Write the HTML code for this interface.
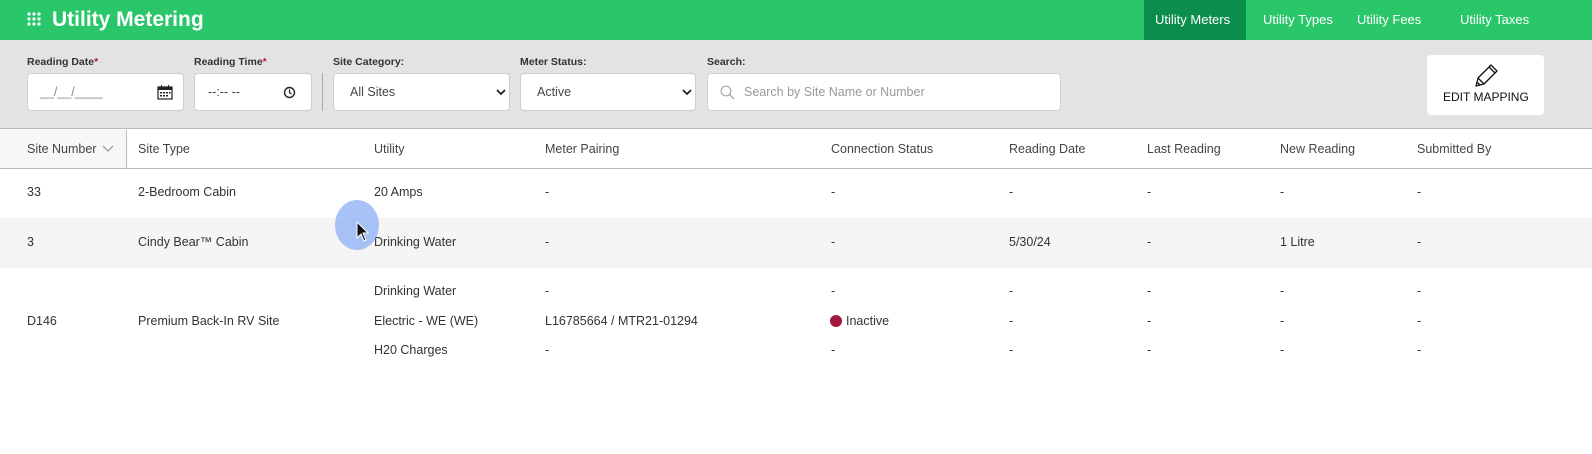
<!DOCTYPE html>
<html><head><meta charset="utf-8"><style>
*{box-sizing:border-box;margin:0;padding:0}
body{width:1592px;height:454px;background:#fff;font-family:"Liberation Sans",Arial,sans-serif;color:#333;position:relative;overflow:hidden;font-size:12px}
.abs{position:absolute;white-space:nowrap}
.top{position:absolute;left:0;top:0;width:1592px;height:40px;background:#2ac66a}
.title{left:52px;top:8px;font-size:21px;font-weight:bold;color:#fff}
.nav{top:0;height:40px;line-height:39px;color:#fff;font-size:13px}
.filt{position:absolute;left:0;top:40px;width:1592px;height:89px;background:#e3e3e6;border-bottom:1px solid #b8b8b8}
.lbl{font-size:10.5px;font-weight:bold;color:#333;top:56px}
.lbl b{color:#c0143c}
.box{position:absolute;top:73px;height:38px;background:#fff;border:1px solid #cfcfd3;border-radius:4px;font-size:12.5px;color:#444;line-height:36px}
.th{top:142px;font-size:12.5px;color:#444}
.td{font-size:12.5px;color:#333}
</style></head><body>
<div class="top"></div>
<svg class="abs" style="left:27px;top:12px" width="14" height="14"><g fill="#fff"><circle cx="2" cy="2" r="1.6"/><circle cx="7" cy="2" r="1.6"/><circle cx="12" cy="2" r="1.6"/><circle cx="2" cy="7" r="1.6"/><circle cx="7" cy="7" r="1.6"/><circle cx="12" cy="7" r="1.6"/><circle cx="2" cy="12" r="1.6"/><circle cx="7" cy="12" r="1.6"/><circle cx="12" cy="12" r="1.6"/></g></svg>
<div class="abs title">Utility Metering</div>
<div class="abs" style="left:1144px;top:0;width:102px;height:40px;background:#0b8d4c"></div>
<div class="abs nav" style="left:1155px">Utility Meters</div>
<div class="abs nav" style="left:1263px">Utility Types</div>
<div class="abs nav" style="left:1357px">Utility Fees</div>
<div class="abs nav" style="left:1460px">Utility Taxes</div>
<div class="filt"></div>
<div class="abs lbl" style="left:27px">Reading Date<b>*</b></div>
<div class="abs lbl" style="left:194px">Reading Time<b>*</b></div>
<div class="abs lbl" style="left:333px">Site Category:</div>
<div class="abs lbl" style="left:520px">Meter Status:</div>
<div class="abs lbl" style="left:707px">Search:</div>
<div class="box" style="left:27px;width:157px;padding-left:12px;color:#888">__/__/____
<svg class="abs" style="left:129px;top:11px" width="16" height="15"><rect x="1" y="2" width="14" height="12" fill="none" stroke="#222" stroke-width="1.2"/><rect x="1" y="2" width="14" height="3" fill="#222"/><g fill="#222"><rect x="3" y="7" width="2" height="1.5"/><rect x="6" y="7" width="2" height="1.5"/><rect x="9" y="7" width="2" height="1.5"/><rect x="12" y="7" width="1.5" height="1.5"/><rect x="3" y="10" width="2" height="1.5"/><rect x="6" y="10" width="2" height="1.5"/><rect x="9" y="10" width="2" height="1.5"/></g><rect x="4" y="0" width="1" height="3" fill="#222"/><rect x="11" y="0" width="1" height="3" fill="#222"/></svg></div>
<div class="box" style="left:194px;width:118px;padding-left:13px">--:-- --
<svg class="abs" style="left:88px;top:12px" width="13" height="13"><circle cx="6.5" cy="6.5" r="5" fill="none" stroke="#222" stroke-width="1.4"/><path d="M6.5 3.5V6.5L8.5 8" fill="none" stroke="#222" stroke-width="1.2"/></svg></div>
<div class="abs" style="left:322px;top:73px;width:1px;height:38px;background:#aaa"></div>
<div class="box" style="left:333px;width:177px;padding-left:16px">All Sites
<svg class="abs" style="left:162px;top:15px" width="10" height="7"><path d="M1 1L5 5L9 1" fill="none" stroke="#222" stroke-width="1.8"/></svg></div>
<div class="box" style="left:520px;width:176px;padding-left:16px">Active
<svg class="abs" style="left:161px;top:15px" width="10" height="7"><path d="M1 1L5 5L9 1" fill="none" stroke="#222" stroke-width="1.8"/></svg></div>
<div class="box" style="left:707px;width:354px;padding-left:36px;color:#999">Search by Site Name or Number
<svg class="abs" style="left:12px;top:11px" width="15" height="15"><circle cx="6" cy="6" r="4.8" fill="none" stroke="#aaa" stroke-width="1.2"/><path d="M9.5 9.5L14 14" stroke="#aaa" stroke-width="1.3"/></svg></div>
<div class="abs" style="left:1427px;top:55px;width:117px;height:60px;background:#fff;border-radius:4px"></div>
<svg class="abs" style="left:1473px;top:62px" width="26" height="27"><path d="M3 24L5 16L18 3L24 9L11 22Z M5 16L11 22 M16 5L22 11 M4 20L7 23" fill="none" stroke="#111" stroke-width="1.3" stroke-linejoin="round"/></svg>
<div class="abs" style="left:1443px;top:90px;font-size:12px;color:#111">EDIT MAPPING</div>
<div class="abs" style="left:0;top:130px;width:127px;height:38px;background:#f7f7f7;border-right:1px solid #bbb"></div>
<div class="abs" style="left:0;top:168px;width:1592px;height:1px;background:#bbb"></div>
<div class="abs th" style="left:27px">Site Number <svg width="12" height="8" style="margin-left:2px"><path d="M1 1L6 6L11 1" fill="none" stroke="#888" stroke-width="1"/></svg></div>
<div class="abs th" style="left:138px">Site Type</div>
<div class="abs th" style="left:374px">Utility</div>
<div class="abs th" style="left:545px">Meter Pairing</div>
<div class="abs th" style="left:831px">Connection Status</div>
<div class="abs th" style="left:1009px">Reading Date</div>
<div class="abs th" style="left:1147px">Last Reading</div>
<div class="abs th" style="left:1280px">New Reading</div>
<div class="abs th" style="left:1417px">Submitted By</div>
<div class="abs" style="left:0;top:218px;width:1592px;height:50px;background:#f5f5f5"></div>
<div class="abs td" style="left:27px;top:185px">33</div><div class="abs td" style="left:138px;top:185px">2-Bedroom Cabin</div><div class="abs td" style="left:374px;top:185px">20 Amps</div>
<div class="abs td" style="left:545px;top:185px">-</div><div class="abs td" style="left:831px;top:185px">-</div><div class="abs td" style="left:1009px;top:185px">-</div><div class="abs td" style="left:1147px;top:185px">-</div><div class="abs td" style="left:1280px;top:185px">-</div><div class="abs td" style="left:1417px;top:185px">-</div>
<div class="abs td" style="left:27px;top:235px">3</div><div class="abs td" style="left:138px;top:235px">Cindy Bear™ Cabin</div><div class="abs td" style="left:374px;top:235px">Drinking Water</div>
<div class="abs td" style="left:545px;top:235px">-</div><div class="abs td" style="left:831px;top:235px">-</div><div class="abs td" style="left:1009px;top:235px">5/30/24</div><div class="abs td" style="left:1147px;top:235px">-</div><div class="abs td" style="left:1280px;top:235px">1 Litre</div><div class="abs td" style="left:1417px;top:235px">-</div>
<div class="abs td" style="left:27px;top:314px">D146</div><div class="abs td" style="left:138px;top:314px">Premium Back-In RV Site</div>
<div class="abs td" style="left:374px;top:284px">Drinking Water</div><div class="abs td" style="left:374px;top:314px">Electric - WE (WE)</div><div class="abs td" style="left:374px;top:343px">H20 Charges</div>
<div class="abs td" style="left:545px;top:284px">-</div><div class="abs td" style="left:545px;top:314px">L16785664 / MTR21-01294</div><div class="abs td" style="left:545px;top:343px">-</div>
<div class="abs td" style="left:831px;top:284px">-</div><div class="abs td" style="left:830px;top:314px"><span style="display:inline-block;width:12px;height:12px;border-radius:50%;background:#a3173f;vertical-align:-2px;margin-right:4px"></span>Inactive</div><div class="abs td" style="left:831px;top:343px">-</div>
<div class="abs td" style="left:1009px;top:284px">-</div><div class="abs td" style="left:1009px;top:314px">-</div><div class="abs td" style="left:1009px;top:343px">-</div>
<div class="abs td" style="left:1147px;top:284px">-</div><div class="abs td" style="left:1147px;top:314px">-</div><div class="abs td" style="left:1147px;top:343px">-</div>
<div class="abs td" style="left:1280px;top:284px">-</div><div class="abs td" style="left:1280px;top:314px">-</div><div class="abs td" style="left:1280px;top:343px">-</div>
<div class="abs td" style="left:1417px;top:284px">-</div><div class="abs td" style="left:1417px;top:314px">-</div><div class="abs td" style="left:1417px;top:343px">-</div>
<div class="abs" style="left:335px;top:200px;width:44px;height:50px;border-radius:50%;background:rgba(140,175,245,0.75)"></div>
<svg class="abs" style="left:356px;top:221px" width="14" height="22"><path d="M1 1L1 17L5 13L8 20L10 19L7 12L12 12Z" fill="#111" stroke="#fff" stroke-width="1"/></svg>
</body></html>
